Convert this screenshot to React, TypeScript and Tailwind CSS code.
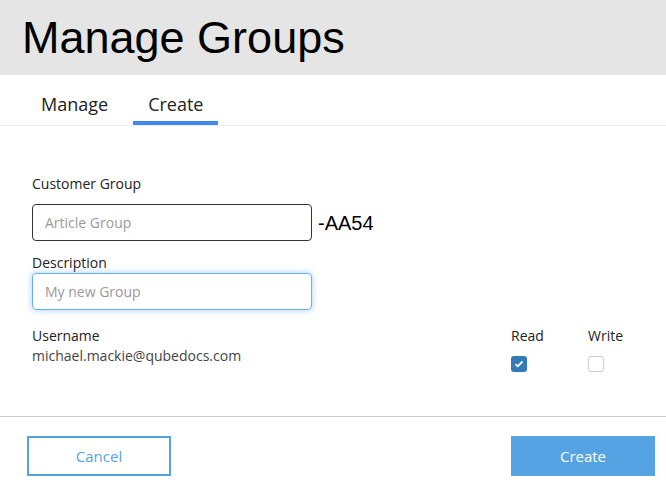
import React, { useState } from 'react';

export default function App() {
    const [tab, setTab] = useState('create');
    const [read, setRead] = useState(true);
    const [write, setWrite] = useState(false);

    return (
        <div className="w-[666px] h-[490px] bg-white font-['Open_Sans',sans-serif] text-[#222] overflow-hidden">
            <div className="h-[75px] bg-[#e5e5e5] pl-[22px] flex items-center">
                <h1 className="font-['Liberation_Sans',Arial,sans-serif] text-[45px] leading-none text-black">Manage Groups</h1>
            </div>

            <div className="h-[51px] border-b border-[#eeeeee] flex gap-[10px] pl-[26px]">
                {[
                    { id: 'manage', label: 'Manage' },
                    { id: 'create', label: 'Create' },
                ].map((t) => (
                    <button
                        key={t.id}
                        onClick={() => setTab(t.id)}
                        className={`px-[15px] pt-[11px] text-[18px] leading-[28px] border-b-4 ${
                            tab === t.id ? 'border-[#4286f0]' : 'border-transparent'
                        }`}
                    >
                        {t.label}
                    </button>
                ))}
            </div>

            <div className="px-8 pt-[48px] text-[14px]">
                <label className="block leading-5">Customer Group</label>
                <div className="flex items-center gap-[6px] mt-[10px]">
                    <input
                        placeholder="Article Group"
                        className="w-[280px] h-[37px] border border-[#333] rounded-[4px] px-3 placeholder-[#999] outline-none"
                    />
                    <span className="font-['Liberation_Sans',Arial,sans-serif] text-[20px] text-black">-AA54</span>
                </div>

                <label className="block leading-5 mt-[12px]">Description</label>
                <input
                    placeholder="My new Group"
                    className="w-[280px] h-[37px] border border-[#66afe9] rounded-[4px] px-3 placeholder-[#999] outline-none shadow-[0_0_6px_rgba(102,175,233,0.6)]"
                />

                <div className="flex mt-[16px]">
                    <div className="flex-1">
                        <div className="leading-5">Username</div>
                        <div className="leading-5 text-[#444]">michael.mackie@qubedocs.com</div>
                    </div>
                    <div className="w-[77px]">
                        <div className="leading-5">Read</div>
                        <button
                            onClick={() => setRead(!read)}
                            className={`mt-[10px] w-4 h-4 rounded-[3px] flex items-center justify-center ${
                                read ? 'bg-[#337ab7]' : 'border border-[#ccc] bg-white'
                            }`}
                        >
                            {read && (
                                <svg width="10" height="8" viewBox="0 0 10 8">
                                    <path d="M1.5 4.2 L3.8 6.3 L8.5 1.5" stroke="white" strokeWidth="1.8" fill="none" />
                                </svg>
                            )}
                        </button>
                    </div>
                    <div className="w-[46px]">
                        <div className="leading-5">Write</div>
                        <button
                            onClick={() => setWrite(!write)}
                            className={`mt-[10px] w-4 h-4 rounded-[3px] flex items-center justify-center ${
                                write ? 'bg-[#337ab7]' : 'border border-[#ccc] bg-white'
                            }`}
                        >
                            {write && (
                                <svg width="10" height="8" viewBox="0 0 10 8">
                                    <path d="M1.5 4.2 L3.8 6.3 L8.5 1.5" stroke="white" strokeWidth="1.8" fill="none" />
                                </svg>
                            )}
                        </button>
                    </div>
                </div>
            </div>

            <div className="mt-[44px] border-t border-[#cccccc] flex justify-between pl-[27px] pt-[19px] pr-[11px]">
                <button className="w-[144px] h-[40px] border-2 border-[#55a3e3] text-[#55a3e3] text-[15px]">Cancel</button>
                <button className="w-[144px] h-[40px] bg-[#55a3e3] text-white text-[15px]">Create</button>
            </div>
        </div>
    );
}
